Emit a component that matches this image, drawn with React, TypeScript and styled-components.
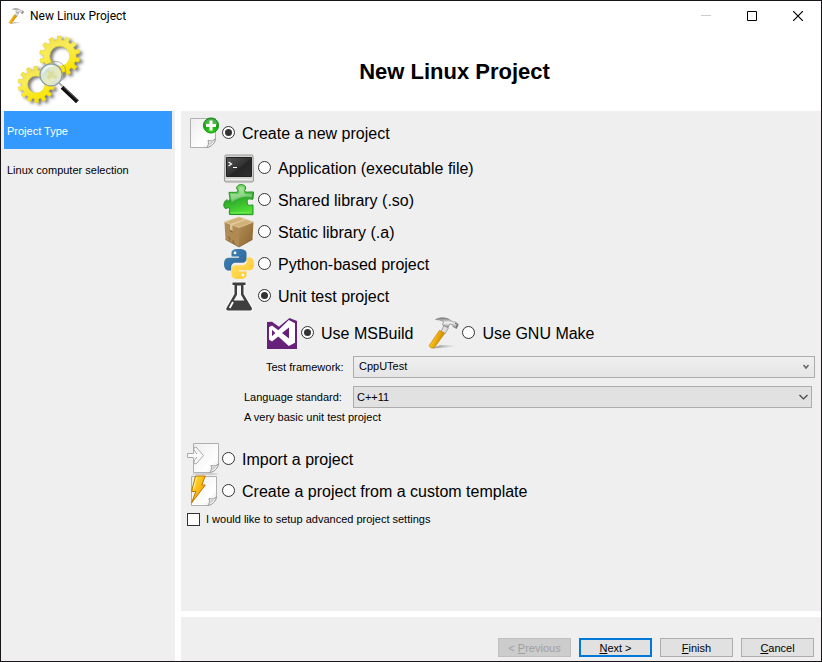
import React, { useState } from "react";
import styled, { createGlobalStyle, css } from "styled-components";

const GlobalStyle = createGlobalStyle`
  * { box-sizing: border-box; }
  html, body, #root { height: 100%; margin: 0; }
  body {
    background: #fff;
    color: #000;
    font: 11px/14px "Liberation Sans", Arial, sans-serif;
  }
  button, select, input { font: inherit; color: inherit; margin: 0; }
`;

/* ---------- window frame ---------- */

const Window = styled.div`
  display: flex;
  flex-direction: column;
  min-height: 100%;
  border: 1px solid #17141a;
  background: #fff;
`;

const TitleBar = styled.header`
  display: flex;
  align-items: center;
  height: 30px;
  padding-left: 7px;
  gap: 6px;
`;

const WindowTitle = styled.span`
  flex: 1;
  font-family: Roboto, "Liberation Sans", sans-serif;
  font-size: 12px;
  line-height: 16px;
`;

const CaptionButtons = styled.div`
  display: flex;
`;

const CaptionButton = styled.button`
  display: grid;
  place-items: center;
  width: 46px;
  height: 28px;
  padding: 0;
  border: 0;
  background: none;
`;

const Banner = styled.div`
  display: flex;
  align-items: center;
  height: 80px;
`;

const Logo = styled.div`
  width: 87px;
  padding-left: 14px;
  display: flex;
`;

const Heading = styled.h1`
  flex: 1;
  margin: 0;
  padding-top: 2px;
  text-align: center;
  font-size: 22px;
  line-height: 26px;
`;

const Body = styled.div`
  flex: 1;
  display: grid;
  grid-template-columns: 174px 1fr;
  column-gap: 6px;
`;

/* ---------- steps ---------- */

const Steps = styled.nav`
  background: #efefef;
  padding: 0 3px;
`;

const Step = styled.a<{ $current?: boolean }>`
  display: flex;
  align-items: center;
  height: 38px;
  margin-bottom: 1px;
  padding: 2px 3px 0;
  text-decoration: none;
  color: ${(p) => (p.$current ? "#fff" : "#000")};
  background: ${(p) => (p.$current ? "#3399ff" : "transparent")};
`;

/* ---------- content ---------- */

const Main = styled.main`
  display: flex;
  flex-direction: column;
  gap: 6px;
`;

const Form = styled.form`
  flex: 1;
  padding: 6px 6px 0;
  background: #efefef;
`;

const Options = styled.div<{ $indent?: number; $top?: number }>`
  display: flex;
  flex-direction: column;
  align-items: flex-start;
  margin-left: ${(p) => p.$indent ?? 0}px;
  margin-top: ${(p) => p.$top ?? 0}px;
`;

const BuildOptions = styled.div`
  display: flex;
  gap: 14px;
  margin: 5px 0 7px 79px;
`;

const OptionLabel = styled.label`
  display: flex;
  align-items: center;
  height: 32px;
  font-size: 16px;
  line-height: 20px;
  white-space: nowrap;

  & > svg { margin-right: 3px; }
`;

const OptionText = styled.span`
  padding-top: 2px;
`;

const Radio = styled.input`
  appearance: none;
  display: grid;
  place-items: center;
  width: 13px;
  height: 13px;
  margin: 0 7px 1px 0;
  border: 1px solid #333;
  border-radius: 50%;
  background: #fff;

  &:checked::before {
    content: "";
    width: 7px;
    height: 7px;
    border-radius: 50%;
    background: #333;
  }
`;

const Field = styled.div<{ $label: number; $right: number }>`
  display: grid;
  grid-template-columns: ${(p) => p.$label}px 1fr;
  align-items: center;
  margin-left: ${(p) => 166 - p.$label}px;
  margin-right: ${(p) => p.$right}px;
  margin-bottom: 8px;
`;

const SelectBox = styled.span`
  display: grid;
  align-items: center;

  & > * { grid-area: 1 / 1; }
  & > svg { justify-self: end; margin-right: 4px; pointer-events: none; }
`;

const Select = styled.select<{ $shaded?: boolean }>`
  appearance: none;
  width: 100%;
  height: 22px;
  border: 1px solid #acacac;
  border-radius: 0;
  ${(p) =>
    p.$shaded
      ? css`padding: 0 20px 0 3px; background: #e1e1e1;`
      : css`padding: 0 20px 2px 5px; background: linear-gradient(#f0f0f0, #e5e5e5);`}
`;

const Hint = styled.p`
  margin: -6px 0 0 57px;
`;

const CheckLabel = styled.label`
  display: flex;
  align-items: center;
  gap: 6px;
  margin-top: 5px;
`;

const CheckBox = styled.input`
  appearance: none;
  width: 13px;
  height: 13px;
  border: 1px solid #333;
  background: #fff;
  &:checked { box-shadow: inset 0 0 0 2px #fff; background: #333; }
`;

const Footer = styled.footer`
  display: flex;
  justify-content: flex-end;
  align-items: flex-end;
  gap: 8px;
  height: 44px;
  padding: 0 7px 4px;
  background: #efefef;
`;

const Button = styled.button<{ $primary?: boolean }>`
  width: 73px;
  height: 19px;
  padding: 0;
  border: ${(p) => (p.$primary ? "2px solid #0078d7" : "1px solid #adadad")};
  background: #e1e1e1;
  &:disabled { color: #a0a0a0; background: #ccc; border-color: #bfbfbf; }
`;

/* ---------- drawings ---------- */

function gear(cx: number, cy: number, outer: number, root: number, hole: number, teeth: number) {
  const pts: string[] = [];
  const step = (Math.PI * 2) / teeth;
  const add = (r: number, a: number) =>
    pts.push(`${(cx + r * Math.cos(a)).toFixed(2)} ${(cy + r * Math.sin(a)).toFixed(2)}`);
  for (let i = 0; i < teeth; i++) {
    const a = i * step - 0.25;
    add(root, a - step * 0.3);
    add(outer, a - step * 0.22);
    add(outer, a + step * 0.22);
    add(root, a + step * 0.3);
  }
  return `M${pts.join("L")}ZM${cx + hole} ${cy}A${hole} ${hole} 0 1 0 ${cx - hole} ${cy}A${hole} ${hole} 0 1 0 ${cx + hole} ${cy}Z`;
}

const GearsLogo = () => (
  <svg width="76" height="80" viewBox="14 31 76 80" aria-hidden="true">
    <defs>
      <linearGradient id="gold" x1="0" y1="0" x2="0.4" y2="1">
        <stop offset="0" stopColor="#eddc48" />
        <stop offset="0.45" stopColor="#f8ec5a" />
        <stop offset="1" stopColor="#fbe500" />
      </linearGradient>
      <linearGradient id="lens" x1="0" y1="0" x2="1" y2="1">
        <stop offset="0" stopColor="#c3e0ee" />
        <stop offset="0.6" stopColor="#e8ebc8" />
        <stop offset="1" stopColor="#cfe4ee" />
      </linearGradient>
      <filter id="cast" x="-20%" y="-20%" width="150%" height="150%">
        <feDropShadow dx="3" dy="2" stdDeviation="1.6" floodColor="#333" floodOpacity="0.65" />
      </filter>
    </defs>
    <g filter="url(#cast)" fill="url(#gold)" fillRule="evenodd" stroke="#dcc400" strokeWidth="0.4">
      <path d={gear(60.5, 55.5, 21, 17, 10.5, 14)} />
      <path d={gear(36, 85, 19, 15, 9, 14)} />
    </g>
    <circle cx="56" cy="72" r="11" fill="none" stroke="#777" strokeOpacity="0.6" />
    <path d="M59.5 83l4 4" stroke="#aaa" strokeWidth="2" />
    <path d="M63 88L79 103" stroke="#111" strokeWidth="4.2" />
    <path d="M64.5 87.500L79.500 101.500" stroke="#777" strokeWidth="0.8" />
    <circle cx="51.5" cy="75" r="11.5" fill="url(#lens)" fillOpacity="0.93" stroke="#8b9ca3" strokeWidth="1.3" />
    <path d="M47 70l4 2 3-2 1 5 4 3-4 1-2-2-4 3-2-3 2-2z" fill="#d9d890" fillOpacity="0.75" />
    <path d="M43 73a9 9 0 0 1 11-7" stroke="#fff" strokeWidth="1.5" fill="none" opacity="0.8" />
  </svg>
);

const Hammer = ({ size = 32, id }: { size?: number; id: string }) => (
  <svg width={size} height={size} viewBox="0 0 32 32" aria-hidden="true">
    <defs>
      <linearGradient id={`${id}-grip`} x1="0" y1="0" x2="1" y2="0.5">
        <stop offset="0.2" stopColor="#f9d34c" />
        <stop offset="0.55" stopColor="#f0ae08" />
        <stop offset="1" stopColor="#b77a00" />
      </linearGradient>
      <linearGradient id={`${id}-steel`} x1="0" y1="0" x2="0" y2="1">
        <stop offset="0" stopColor="#777" />
        <stop offset="0.45" stopColor="#f4f4f4" />
        <stop offset="1" stopColor="#808080" />
      </linearGradient>
      <linearGradient id={`${id}-ground`}>
        <stop offset="0" stopColor="#777" stopOpacity="0.8" />
        <stop offset="1" stopColor="#999" stopOpacity="0" />
      </linearGradient>
    </defs>
    <path d="M5 31.5L13 28l18 .8-9 1.400z" fill={`url(#${id}-ground)`} />
    <path d="M17 8.500l4.500 2.300-3.500 6-4-2.200z" fill="#ddd" stroke="#888" strokeWidth="0.7" />
    <path d="M12.500 13.300l5.300 3L7.500 30.500c-1 1.400-5.500.3-5.300-2z" fill={`url(#${id}-grip)`} stroke="#b98208" strokeWidth="0.6" />
    <path d="M8.500 2.500C12 .5 17 .2 21 1.800l5.500 3.400 1.500-.5 3.300 2.500-1.700 4.400-3.500-1.800-.4-2-2.700-1-2 3.600-5.500-2.500 1-3.200C14 3 11.500 2.800 8.500 2.500z" fill={`url(#${id}-steel)`} stroke="#777" strokeWidth="0.6" />
    <path d="M28 6l2.500 1.500-1.200 3" stroke="#555" strokeWidth="1" fill="none" />
  </svg>
);

const Page = ({ id }: { id: string }) => (
  <>
    <linearGradient id={id} x1="0" y1="0" x2="1" y2="1">
      <stop offset="0" stopColor="#ededed" />
      <stop offset="0.7" stopColor="#fff" />
      <stop offset="1" stopColor="#ddd" />
    </linearGradient>
    <path d="M1.500 1.500h25V22q-1 6-8 8.500h-17z" fill={`url(#${id})`} stroke="#b0b0b0" />
    <path d="M17.500 30.500c2-1.500 2.500-4 1.500-7 3 1 6 .5 7.500-2-.5 4.500-4 8.500-9 9z" fill="#f6f6f6" stroke="#999" strokeWidth="1" />
    <path d="M19.500 28.500l1.500-3.500 3.500-.5q-2 3-5 4z" fill="#ccc" />
  </>
);

const NewProjectIcon = () => (
  <svg width="32" height="32" viewBox="0 0 32 32" aria-hidden="true">
    <g transform="translate(2 0)"><Page id="paper-new" /></g>
    <radialGradient id="plus" cx="0.5" cy="0.85" r="0.8">
      <stop offset="0" stopColor="#31d51c" />
      <stop offset="1" stopColor="#078d08" />
    </radialGradient>
    <circle cx="24" cy="8.5" r="7.600" fill="url(#plus)" stroke="#078207" strokeWidth="0.8" />
    <path d="M17.500 7.500a6.500 6 0 0 1 13 0q-6 2.500-13 0z" fill="#fff" opacity="0.25" />
    <path d="M24 3.500v10M19 8.500h10" stroke="#fff" strokeWidth="3" />
  </svg>
);

const TerminalIcon = () => (
  <svg width="32" height="32" viewBox="0 0 32 32" aria-hidden="true">
    <linearGradient id="screen" x1="0" y1="0" x2="1" y2="1">
      <stop offset="0" stopColor="#555" />
      <stop offset="0.5" stopColor="#333" />
      <stop offset="0.55" stopColor="#252525" />
      <stop offset="1" stopColor="#303030" />
    </linearGradient>
    <path d="M3 3h26q1 0 1 1l.6 24q0 2-1.600 2H3q-1.600 0-1.600-2L2 4q0-1 1-1z" fill="#d3d3cf" stroke="#999" />
    <path d="M3.500 5.500h25v19h-25z" fill="url(#screen)" stroke="#222" />
    <path d="M2.500 27.500h27" stroke="#f2f2f2" />
    <path d="M5.500 10l3 2-3 2M10 15.500h4" stroke="#fff" strokeWidth="1.200" fill="none" />
  </svg>
);

const PuzzleIcon = () => (
  <svg width="32" height="32" viewBox="0 0 32 32" aria-hidden="true">
    <linearGradient id="leaf" x1="0" y1="0" x2="0.3" y2="1">
      <stop offset="0" stopColor="#9be58c" />
      <stop offset="0.5" stopColor="#4fc043" />
      <stop offset="0.55" stopColor="#2fa92c" />
      <stop offset="1" stopColor="#4bdc35" />
    </linearGradient>
    <path d="M6 8.500c3-.5 5.500.3 8.500-.5 1.500-1-.8-2.500-.8-4 0-4.500 9-4.500 9-.2 0 1.800-2 3-.7 4 2.500.8 5.500-.2 8.500.2l-.5 7c-1.500 1.300-3.500-1.200-5 .2-1.500 1.500-1 5 .5 6 1.500.8 3-1 4.500 0v9.500L6.500 30.500c-.8-2 .7-5-.2-6.500-1.300-1.200-3 1-4.300.3C-.2 22 1 17 3.500 16c1.500-.3 2 1.500 3 .7 1.200-2.500-.5-5.500-.5-8.200z" fill="url(#leaf)" stroke="#258f22" strokeWidth="1" />
    <path d="M7.500 10H15c3-1 0-4.500 1-6s4-1.500 5 0-1 4.500 1 6h7l-.3 3c-7-.8-14 1-20 5z" fill="#fff" opacity="0.35" />
    <path d="M8 29l20-1" stroke="#77e860" strokeWidth="1" />
  </svg>
);

const BoxIcon = () => (
  <svg width="32" height="32" viewBox="0 0 32 32" aria-hidden="true">
    <linearGradient id="box-right" x1="0" y1="0" x2="1" y2="1">
      <stop offset="0" stopColor="#b48e55" />
      <stop offset="1" stopColor="#8a632f" />
    </linearGradient>
    <path d="M1.500 6L16 1l14.500 5L16 11.500z" fill="#d2b179" />
    <path d="M1.500 6L16 11.500V31L2.500 23.500z" fill="#b08a53" />
    <path d="M30.500 6L16 11.500V31l13.500-7.500z" fill="url(#box-right)" />
    <path d="M1.500 6L16 1l14.500 5L16 11.500z" fill="none" stroke="#e1c796" strokeWidth="0.7" />
    <path d="M7 8l14-5 2.500.8L9.500 9v6l-2.500-1.500z" fill="#e1cda2" opacity="0.85" />
    <path d="M7 14.500l2.500 1.500" stroke="#76532a" />
    <path d="M5 21l2 1v2.500M10 24v2.500l2 1" stroke="#84602f" fill="none" />
    <path d="M2.500 23.500L16 31l13.500-7.500" fill="none" stroke="#7b572b" strokeWidth="0.7" />
  </svg>
);

const PythonIcon = () => (
  <svg width="32" height="32" viewBox="0 0 32 32" aria-hidden="true">
    <linearGradient id="py-blue" x1="0" y1="0" x2="1" y2="1">
      <stop offset="0" stopColor="#3f86bd" />
      <stop offset="1" stopColor="#2c628f" />
    </linearGradient>
    <linearGradient id="py-gold" x1="0" y1="0" x2="1" y2="1">
      <stop offset="0" stopColor="#ffe063" />
      <stop offset="1" stopColor="#ffc92f" />
    </linearGradient>
    <path d="M15.800 1C9.500 1 8.500 3.200 8.500 5v3.500H16v1.200H5.500C2.500 9.700 1 12.500 1 16c0 4 1.800 6.500 4.500 6.500h2.700V19c0-2.500 2-4.300 4.300-4.300h7.300c2 0 3.700-1.700 3.700-3.700V5c0-2.300-2-4-7.700-4z" fill="url(#py-blue)" />
    <circle cx="12" cy="4.900" r="1.400" fill="#fff" />
    <path d="M16.200 31c6.300 0 7.300-2.200 7.300-4v-3.500H16v-1.200h10.500c3 0 4.500-2.800 4.500-6.300 0-4-1.800-6.500-4.500-6.500h-2.700V13c0 2.500-2 4.300-4.300 4.300h-7.300c-2 0-3.700 1.700-3.700 3.700v6c0 2.300 2 4 7.700 4z" fill="url(#py-gold)" />
    <circle cx="20" cy="27.100" r="1.400" fill="#fff" />
  </svg>
);

const FlaskIcon = () => (
  <svg width="32" height="32" viewBox="0 0 32 32" aria-hidden="true">
    <path d="M8.500 1.500h15V6h-2v7.500L30 28q.8 3-2 3.500H4.500Q1.500 31 2.500 28l8-14.500V6h-2z" fill="#f8f8f8" />
    <path d="M9.500 2.500h13V5h-2v9l8.300 14q.7 2.200-1.600 2.500H5Q2.700 30.200 3.500 28l8-14V5h-2z" fill="#3e3e3e" />
    <path d="M14 5.500h4v9.200l3.300 5.800H10.700L14 14.700z" fill="#f4f4f4" />
    <path d="M10 22l-3.300 6" stroke="#fff" strokeWidth="1.800" />
  </svg>
);

const StudioIcon = () => (
  <svg width="32" height="32" viewBox="0 0 32 32" aria-hidden="true">
    <path d="M1 5l5-.2 7 5L23.500 1 31 4v28H1z" fill="#68217a" />
    <path d="M22.800 3l6.200 3.200v19.600L22.800 29l-10.500-9.500-6.300 5L3 22.500V10.300L6 8.500l6.300 4.700z" fill="#fff" />
    <path d="M23 10.500v11L16 16z" fill="#68217a" />
    <path d="M6 12.800v6.400L9.300 16z" fill="#68217a" />
  </svg>
);

const ImportIcon = () => (
  <svg width="32" height="32" viewBox="0 0 32 32" aria-hidden="true">
    <ellipse cx="18" cy="31" rx="13" ry="1" fill="#aaa" opacity="0.5" />
    <g transform="translate(5 -1)"><Page id="paper-import" /></g>
    <path d="M.5 10.500h10L7 6.800V4l2-.6L18.500 13 9 22l-2-.8v-2.700l3.500-4H.5z" fill="#f8f8f8" />
    <path d="M6.500 10.500h-6v4h6M7 7V4.500L9 4l7.500 8.500L9 21l-2-.5V18l4-5.500z" fill="none" stroke="#aaa" />
    <path d="M2 12.500h12" stroke="#fafafa" strokeWidth="3" />
  </svg>
);

const TemplateIcon = () => (
  <svg width="32" height="32" viewBox="0 0 32 32" aria-hidden="true">
    <g transform="translate(3 0)"><Page id="paper-template" /></g>
    <linearGradient id="bolt" x1="0" y1="0" x2="1" y2="1">
      <stop offset="0" stopColor="#ffe949" />
      <stop offset="0.5" stopColor="#fdb913" />
      <stop offset="1" stopColor="#e78a00" />
    </linearGradient>
    <path d="M8.500 1h9.800l-3.500 9h3.500L4.500 28l4.300-11.500H4.500z" fill="url(#bolt)" stroke="#bd7600" strokeWidth="1" />
    <path d="M9.500 2.500L6.500 14" stroke="#fff6a0" strokeWidth="1" />
  </svg>
);

const SmallChevron = () => (
  <svg width="9" height="9" viewBox="0 0 9 9" aria-hidden="true">
    <path d="M1.500 2L4 5 6.500 2" fill="none" stroke="#666" strokeWidth="1.500" />
  </svg>
);

const WideChevron = () => (
  <svg width="9" height="9" viewBox="0 0 9 9" aria-hidden="true">
    <path d="M.5 2l4 4 4-4" fill="none" stroke="#444" strokeWidth="1.200" />
  </svg>
);

/* ---------- page ---------- */

const projectKinds = [
  { value: "app", text: "Application (executable file)", Icon: TerminalIcon },
  { value: "so", text: "Shared library (.so)", Icon: PuzzleIcon },
  { value: "a", text: "Static library (.a)", Icon: BoxIcon },
  { value: "py", text: "Python-based project", Icon: PythonIcon },
  { value: "test", text: "Unit test project", Icon: FlaskIcon },
];

interface OptionProps {
  name: string;
  value: string;
  current: string;
  onPick: (value: string) => void;
  icon: React.ReactNode;
  children: React.ReactNode;
}

const Option = ({ name, value, current, onPick, icon, children }: OptionProps) => (
  <OptionLabel>
    {icon}
    <Radio type="radio" name={name} value={value} checked={current === value} onChange={() => onPick(value)} />
    <OptionText>{children}</OptionText>
  </OptionLabel>
);

export default function App() {
  const [source, setSource] = useState("new");
  const [kind, setKind] = useState("test");
  const [build, setBuild] = useState("msbuild");

  return (
    <>
      <GlobalStyle />
      <Window>
        <TitleBar>
          <Hammer size={16} id="title-hammer" />
          <WindowTitle>New Linux Project</WindowTitle>
          <CaptionButtons>
            <CaptionButton type="button" aria-label="Minimize" disabled>
              <svg width="10" height="10" viewBox="0 0 10 10"><path d="M0 4.500h10" stroke="#ccc" /></svg>
            </CaptionButton>
            <CaptionButton type="button" aria-label="Maximize">
              <svg width="10" height="10" viewBox="0 0 10 10"><path d="M.5.500h9v9h-9z" fill="none" stroke="#000" /></svg>
            </CaptionButton>
            <CaptionButton type="button" aria-label="Close">
              <svg width="10" height="10" viewBox="0 0 10 10"><path d="M0 0l10 10M10 0L0 10" stroke="#000" strokeWidth="1.200" /></svg>
            </CaptionButton>
          </CaptionButtons>
        </TitleBar>
        <Banner>
          <Logo><GearsLogo /></Logo>
          <Heading>New Linux Project</Heading>
        </Banner>
        <Body>
          <Steps aria-label="Wizard steps">
            <Step href="#type" $current aria-current="step">Project Type</Step>
            <Step href="#computer">Linux computer selection</Step>
          </Steps>
          <Main>
            <Form id="wizard" onSubmit={(e) => e.preventDefault()}>
              <Options>
                <Option name="source" value="new" current={source} onPick={setSource} icon={<NewProjectIcon />}>
                  Create a new project
                </Option>
              </Options>
              <Options $indent={36} $top={3}>
                {projectKinds.map(({ value, text, Icon }) => (
                  <Option key={value} name="kind" value={value} current={kind} onPick={setKind} icon={<Icon />}>
                    {text}
                  </Option>
                ))}
              </Options>
              <BuildOptions>
                <Option name="build" value="msbuild" current={build} onPick={setBuild} icon={<StudioIcon />}>
                  Use MSBuild
                </Option>
                <Option name="build" value="make" current={build} onPick={setBuild} icon={<Hammer id="make-hammer" />}>
                  Use GNU Make
                </Option>
              </BuildOptions>
              <Field $label={87} $right={0}>
                <label htmlFor="framework">Test framework:</label>
                <SelectBox>
                  <Select id="framework"><option>CppUTest</option></Select>
                  <SmallChevron />
                </SelectBox>
              </Field>
              <Field $label={109} $right={3}>
                <label htmlFor="standard">Language standard:</label>
                <SelectBox>
                  <Select id="standard" $shaded><option>C++11</option></Select>
                  <WideChevron />
                </SelectBox>
              </Field>
              <Hint>A very basic unit test project</Hint>
              <Options $top={19}>
                <Option name="source" value="import" current={source} onPick={setSource} icon={<ImportIcon />}>
                  Import a project
                </Option>
                <Option name="source" value="template" current={source} onPick={setSource} icon={<TemplateIcon />}>
                  Create a project from a custom template
                </Option>
              </Options>
              <CheckLabel>
                <CheckBox type="checkbox" />
                I would like to setup advanced project settings
              </CheckLabel>
            </Form>
            <Footer>
              <Button type="button" disabled>&lt; <u>P</u>revious</Button>
              <Button type="submit" form="wizard" $primary><u>N</u>ext &gt;</Button>
              <Button type="button"><u>F</u>inish</Button>
              <Button type="button"><u>C</u>ancel</Button>
            </Footer>
          </Main>
        </Body>
      </Window>
    </>
  );
}
